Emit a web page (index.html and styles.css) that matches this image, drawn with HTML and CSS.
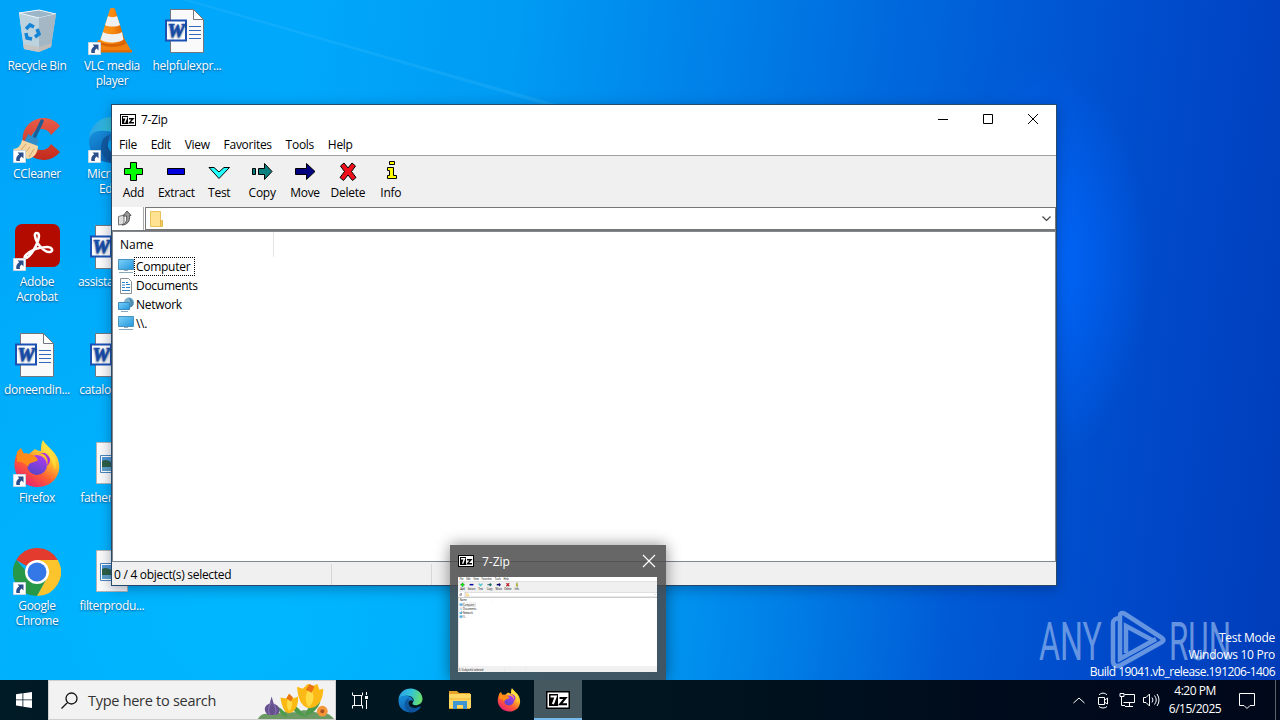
FILE: index.html
```html
<!DOCTYPE html>
<html lang="en">
<head>
    <meta charset="UTF-8">
    <meta name="viewport" content="width=device-width, initial-scale=1.0">
    <title>Desktop</title>
    <link rel="stylesheet" href="styles.css">
</head>
<body>
    <!-- shared icons -->
    <svg class="defs" width="0" height="0">
        <defs>
            <linearGradient id="screenFill" x1="0" y1="0" x2="1" y2="1"><stop offset="0" stop-color="#7fd2fa"/><stop offset="1" stop-color="#2196dc"/></linearGradient>
            <linearGradient id="coneFill" x1="0" x2="1"><stop offset="0" stop-color="#ff9a20"/><stop offset=".5" stop-color="#f88a10"/><stop offset="1" stop-color="#d85f00"/></linearGradient>
            <linearGradient id="foxFill" x1=".85" y1="0" x2=".2" y2="1"><stop offset="0" stop-color="#fff44f"/><stop offset=".35" stop-color="#ffbd2c"/><stop offset=".65" stop-color="#ff5a35"/><stop offset="1" stop-color="#e5177f"/></linearGradient>
            <linearGradient id="foxGlobe" x1=".7" y1="0" x2=".3" y2="1"><stop offset="0" stop-color="#b03af0"/><stop offset="1" stop-color="#5546c8"/></linearGradient>
            <linearGradient id="edgeTop" x1="0" x2="1" y1=".3" y2=".5"><stop offset="0" stop-color="#2a9fe8"/><stop offset=".5" stop-color="#33c4d8"/><stop offset="1" stop-color="#6be06a"/></linearGradient>
            <linearGradient id="edgeBottom" x1="0" y1="0" x2=".6" y2="1"><stop offset="0" stop-color="#1793e0"/><stop offset="1" stop-color="#0c59a8"/></linearGradient>
            <linearGradient id="ccFill" x1="0" y1="0" x2="0" y2="1"><stop offset="0" stop-color="#e85c48"/><stop offset="1" stop-color="#c22a1c"/></linearGradient>
            <linearGradient id="binFill" x1="0" y1="0" x2="1" y2="1"><stop offset="0" stop-color="#d9e6ee"/><stop offset="1" stop-color="#93adc0"/></linearGradient>

            <symbol id="shortcut" viewBox="0 0 13 13">
                <path d="M.5.5h12v12H.5z" fill="#fff" stroke="#c8d8e4"/>
                <path d="M4.500 2.500h6v6L8.600 6.600C7 7.800 6.400 9 7 11H3.400C2.600 8 4 6 6.200 4.300z" fill="#2a4f8c"/>
            </symbol>
            <symbol id="bin" viewBox="0 0 48 48">
                <path d="m6 5 20-3 17 4-5 33-12 5-15-3z" fill="url(#binFill)"/>
                <path d="m6 5 20 5v34l-15-3z" fill="#bdd2df"/>
                <path d="m6 5 20-3 17 4-17 4z" fill="#9bb6c8" stroke="#eef5f9"/>
                <path d="m26 10 17-4-5 33-12 5z" fill="#a3b7c5"/>
                <path d="m10 36 16 3 13-4-1 4-12 5-15-3z" fill="#c9bfb6" opacity=".7"/>
                <g fill="none" stroke="#1484d6" stroke-width="3.500"><path d="m13 21 4-4 4 2"/><path d="m24 21 2 5-4 3"/><path d="m19 31-5-1-1-5"/></g>
            </symbol>
            <symbol id="vlc" viewBox="0 0 48 48">
                <path d="M10 32h27l7 12H5z" fill="#f08010"/>
                <path d="M5 42h39v2.500H5z" fill="#e56d00"/>
                <path d="M11 35c3 5 24 5 27 0l-2-5H13z" fill="#d96200"/>
                <path d="M22 1c1-1.300 4-1.300 5 0l10 32c-3 4-22 4-25 0z" fill="url(#coneFill)"/>
                <path d="m20 8-3 9c3 2 12 2 15 0l-3-9c-2 1.500-7 1.500-9 0zM15 24l-2.500 7.500c4 4 19 4 23 0L34 24c-4 3-15 3-19 0z" fill="#eef0f2"/>
            </symbol>
            <symbol id="word" viewBox="0 0 48 48">
                <path d="M8.500 1.500h23l10 10v33h-33z" fill="#fafafa" stroke="#73777d"/>
                <path d="M31.500 1.500v10h10z" fill="#fff" stroke="#73777d"/>
                <path d="M27 18.500h12M27 22.500h12M27 26.500h12M27 30.500h12" stroke="#3269b8"/>
                <path d="M4 12.500h20v20H4z" fill="#fff" stroke="#1c51b4" stroke-width="2"/>
                <text x="5.500" y="28.500" textLength="17" lengthAdjust="spacingAndGlyphs" class="word-letter">W</text>
            </symbol>
            <symbol id="picture" viewBox="0 0 48 48">
                <path d="M8.500 2.500h31v41h-31z" fill="#fafafa" stroke="#b5b5b5"/>
                <path d="M12.500 15.500h23v17h-23z" fill="#fff" stroke="#4b85bd"/>
                <path d="M14 17h20v7H14z" fill="#4f96d6"/>
                <path d="M14 21q5-3 10 2l10 2v3H14z" fill="#2e6046"/><path d="M14 27h20v4H14z" fill="#5fa1c9"/>
            </symbol>
            <symbol id="ccleaner" viewBox="0 0 48 48">
                <path d="M47 10A21 21 0 1 0 47 36l-9-8A10.500 10.500 0 1 1 38 19z" fill="url(#ccFill)"/>
                <path d="m29 5-9 19" stroke="#1d5d91" stroke-width="3.500" stroke-linecap="round"/>
                <path d="m15 18 11 6-3 7-12-5z" fill="#2f8dca"/>
                <path d="m9 24 16 6c0 8-5 12-10 13C9 41 4 37 0 33c5 0 8-4 9-9z" fill="#f5d5a2"/>
                <path d="m7 35 6-7m-2 10 6-7m-1 10 5-8" stroke="#d3a669"/>
            </symbol>
            <symbol id="edge" viewBox="0 0 48 48">
                <path d="M1 23C2 9 12 1 24 1c14 0 23 10 23 20 0 8-7 12-13 12-5 0-7-2-6-4 6-7-1-15-11-14C9 15 3 18 1 23z" fill="url(#edgeTop)"/>
                <path d="M1 24c1-7 8-10 16-9 7 1 12 5 12 10-3-3-8-2-9 3-1 8 9 14 21 8 2-1 3 0 2 2-5 7-13 10-20 9C9 46 1 37 1 24z" fill="url(#edgeBottom)"/>
                <path d="M20 28c-1 9 9 14 21 8-5 7-11 10-17 10-9-2-13-12-10-20 1-4 4-6 8-7-1 2-2 5-2 9z" fill="#114a8b" opacity=".65"/>
            </symbol>
            <symbol id="acrobat" viewBox="0 0 48 48">
                <rect x="2" y="0" width="45" height="43" rx="7" fill="#b30b00"/>
                <path d="M13 34c4-1 12-13 13-22 0-4-5-4-4 0 1 8 10 17 15 16 4-1 2-5-3-5-9 0-17 4-21 8-2 2-2 4 0 3z" fill="none" stroke="#fff" stroke-width="2.500"/>
            </symbol>
            <symbol id="firefox" viewBox="0 0 48 48">
                <path d="M30 0c2 5 10 9 14 17 7 15-3 30-19 30C9 47-1 33 2 20c1-5 2-8 5-11l2 5c2-1 5-1 7 0l6-5c3 2 6 2 6 2 0-4 0-8 2-11z" fill="url(#foxFill)"/>
                <circle cx="24" cy="25" r="10" fill="url(#foxGlobe)"/>
                <path d="M4 12 8 8l3 6c4-1 8 0 12 3l2 3c-3 3-9 1-10 7-2-3-7-6-11-5z" fill="#ff8a18"/>
                <path d="M25 13c8 0 11 6 9 13 5-4 3-10 0-13z" fill="#a62ee8"/>
                <path d="M31 2c8 9 14 16 11 28-2-7-4-12-9-16-4-4-5-8-2-12z" fill="#ffe03f" opacity=".75"/>
            </symbol>
            <symbol id="chrome" viewBox="0 0 48 48">
                <path d="M24 24 3.200 12A24 24 0 0 1 44.800 12z" fill="#e33b2e"/>
                <path d="M24 24h-10L3.200 12A24 24 0 0 0 24 48l10-18z" fill="#279847"/>
                <path d="M24 12h20.800A24 24 0 0 1 24 48l10-18z" fill="#fcc42c"/>
                <circle cx="24" cy="24" r="12" fill="#fff"/><circle cx="24" cy="24" r="9.500" fill="#3478e8"/>
            </symbol>
            <symbol id="sevenzip" viewBox="0 0 16 12">
                <path d="M0 0h16v12H0z" fill="#000"/><path d="M1 1h14v10H1z" fill="#fff"/><path d="M2 2h6v8H2z" fill="#000"/>
                <path d="M3 3.700h3.500L4.600 8.700" fill="none" stroke="#fff" stroke-width="1.400"/>
                <path d="M9 4.700h4L9.500 8.800H14" fill="none" stroke="#000" stroke-width="1.400"/>
            </symbol>
            <symbol id="monitor" viewBox="0 0 16 16">
                <path d="M.5.5h15v10H.5z" fill="url(#screenFill)" stroke="#4a93bf"/>
                <path d="M6 11h4v1H6z" fill="#9ab"/><path d="M1 13.500h14" stroke="#8aa9bc"/>
            </symbol>
        </defs>
    </svg>

    <div class="screen">
        <svg class="rays" width="1280" height="680" viewBox="0 0 1280 680">
            <path d="M190 0 556 104H542L182 0z" fill="#5ac8ff" opacity=".17"/>
        </svg>

        <div class="desktop">
            <div class="shortcut"><div class="pic"><svg><use href="#bin"/></svg></div><span>Recycle Bin</span></div>
            <div class="shortcut"><div class="pic"><svg><use href="#ccleaner"/></svg><svg class="arrow"><use href="#shortcut"/></svg></div><span>CCleaner</span></div>
            <div class="shortcut"><div class="pic"><svg><use href="#acrobat"/></svg><svg class="arrow"><use href="#shortcut"/></svg></div><span>Adobe Acrobat</span></div>
            <div class="shortcut"><div class="pic doc"><svg><use href="#word"/></svg></div><span>doneendin...</span></div>
            <div class="shortcut"><div class="pic"><svg><use href="#firefox"/></svg><svg class="arrow"><use href="#shortcut"/></svg></div><span>Firefox</span></div>
            <div class="shortcut"><div class="pic"><svg><use href="#chrome"/></svg><svg class="arrow"><use href="#shortcut"/></svg></div><span>Google Chrome</span></div>
            <div class="shortcut"><div class="pic"><svg><use href="#vlc"/></svg><svg class="arrow"><use href="#shortcut"/></svg></div><span>VLC media player</span></div>
            <div class="shortcut"><div class="pic"><svg><use href="#edge"/></svg><svg class="arrow"><use href="#shortcut"/></svg></div><span>Microsoft Edge</span></div>
            <div class="shortcut"><div class="pic doc"><svg><use href="#word"/></svg></div><span>assistantan...</span></div>
            <div class="shortcut"><div class="pic doc"><svg><use href="#word"/></svg></div><span>catalogson...</span></div>
            <div class="shortcut"><div class="pic"><svg><use href="#picture"/></svg></div><span>fathercom...</span></div>
            <div class="shortcut"><div class="pic"><svg><use href="#picture"/></svg></div><span>filterprodu...</span></div>
            <div class="shortcut"><div class="pic doc"><svg><use href="#word"/></svg></div><span>helpfulexpr...</span></div>
        </div>

        <div class="window">
            <div class="titlebar">
                <svg class="app-icon"><use href="#sevenzip"/></svg>
                <span class="title">7-Zip</span>
                <div class="controls">
                    <svg viewBox="0 0 10 10"><path d="M0 5.500h10"/></svg>
                    <svg viewBox="0 0 10 10"><path d="M.5.500h9v9h-9z"/></svg>
                    <svg viewBox="0 0 10 10"><path d="m0 0 10 10M10 0 0 10"/></svg>
                </div>
            </div>
            <div class="client" id="client">
                <div class="menu">
                    <span>File</span><span>Edit</span><span>View</span><span>Favorites</span><span>Tools</span><span>Help</span>
                </div>
                <div class="toolbar">
                    <div class="tool"><svg viewBox="0 0 22 22"><path d="M8.500 1.500h6v6h6v6h-6v6h-6v-6h-6v-6h6z" fill="#0f0" stroke="#000"/></svg><span>Add</span></div>
                    <div class="tool"><svg viewBox="0 0 22 22"><path d="M2.500 7.500h17v6h-17z" fill="#00d" stroke="#000"/></svg><span>Extract</span></div>
                    <div class="tool"><svg viewBox="0 0 22 22"><path d="M1 6.500h5l5 4.500 5-4.500h5.500l-10.500 11z" fill="#2ff" stroke="#000"/></svg><span>Test</span></div>
                    <div class="tool"><svg viewBox="0 0 22 22"><path d="M1.500 7.500h3v6h-3zM7.500 7.500h6v-5L21 10.500l-7.500 8v-5h-6z" fill="#088080" stroke="#000"/></svg><span>Copy</span></div>
                    <div class="tool"><svg viewBox="0 0 22 22"><path d="M1.500 7.500h11v-5L21 10.500l-8.500 8v-5h-11z" fill="#000080" stroke="#000"/></svg><span>Move</span></div>
                    <div class="tool"><svg viewBox="0 0 22 22"><path d="M3.500 5 7 2l4 5 4-5 3.500 3-4 5.500 4.500 6-3.500 3-4.500-5.500-4.500 5.500-3.500-3 4.500-6z" fill="#f0101c" stroke="#000"/></svg><span>Delete</span></div>
                    <div class="tool"><svg viewBox="0 0 22 22"><path d="M9.500.500h5v3h-5zM7.500 6.500h6v8h3v3h-9v-3h2v-5h-2z" fill="#ff0" stroke="#000"/></svg><span>Info</span></div>
                </div>
                <div class="address">
                    <div class="up">
                        <svg width="16" height="16" viewBox="0 0 16 16"><path d="M1.500 6.500 7 5v9l-5.500 1z" fill="#ddd" stroke="#777"/><path d="M5 15c4-1 5-4 4.500-9H6l4-5 4 4.500h-1.500C13.500 11 10 15 5 15z" fill="#999" stroke="#555"/></svg>
                    </div>
                    <div class="path">
                        <svg width="14" height="16" viewBox="0 0 14 16"><path d="M.5.500h10v15H.5z" fill="#ffe392" stroke="#e8c35c"/><path d="M10.500 9.500h2v6h-2z" fill="#f5cf68" stroke="#e3b64c"/></svg>
                        <svg class="chevron" width="9" height="6" viewBox="0 0 9 6"><path d="m.5.500 4 4 4-4" fill="none" stroke="#444" stroke-width="1.200"/></svg>
                    </div>
                </div>
                <div class="list">
                    <div class="list-head"><span>Name</span></div>
                    <div class="item"><svg viewBox="0 0 16 16"><use href="#monitor"/></svg><span class="focused">Computer</span></div>
                    <div class="item"><svg viewBox="0 0 16 16"><path d="M2.500.500h8l3 3v12h-11z" fill="#fff" stroke="#8a8f94"/><path d="M4 4.500h3M4 7h3M8 6.500h4M4 9.500h3M8 9.500h4M4 12.500h8M8 4.500h2" stroke="#2b83c8"/></svg><span>Documents</span></div>
                    <div class="item"><svg viewBox="0 0 16 16"><circle cx="11" cy="5.500" r="5" fill="#7fb2cc"/><path d="M10 .5c3 3 3 7 1 10 6 0 6-8-1-10z" fill="#4a8bb0"/><path d="M.5 5.500h11v7H.5z" fill="url(#screenFill)" stroke="#3a8cc0"/><path d="M3 14.500h7" stroke="#8aa9bc"/></svg><span>Network</span></div>
                    <div class="item"><svg viewBox="0 0 16 16"><use href="#monitor"/></svg><span>\\.</span></div>
                </div>
                <div class="status"><span class="part wide">0 / 4 object(s) selected</span><span class="part"></span><span class="rest"></span></div>
            </div>
        </div>

        <svg class="watermark" width="200" height="64" viewBox="0 0 200 64">
            <text x="2" y="51" textLength="63" lengthAdjust="spacingAndGlyphs">ANY</text>
            <text x="132" y="51" textLength="62" lengthAdjust="spacingAndGlyphs">RUN</text>
            <path d="M83 9c-4 0-7 2-7 5v38c0 5 4 6 8 4l41-23c2-1 2-3 0-4L88 5c-3-2-5-1-5 2v43l36-20M89 44V17l28 15"/>
        </svg>
        <div class="build">
            <div>Test Mode</div>
            <div>Windows 10 Pro</div>
            <div class="number">Build 19041.vb_release.191206-1406</div>
        </div>

        <div class="preview">
            <div class="preview-head">
                <svg class="app-icon"><use href="#sevenzip"/></svg>
                <span>7-Zip</span>
                <svg class="close" viewBox="0 0 12 12"><path d="m0 0 12 12M12 0 0 12"/></svg>
            </div>
            <div class="thumb" id="thumb"></div>
        </div>

        <div class="taskbar">
            <div class="start"><svg width="16" height="16" viewBox="0 0 16 16"><path d="m0 2.200 6.500-.9v6.200H0zM7.300 1.200 16 0v7.500H7.300zM0 8.300h6.500v6.200L0 13.600zM7.300 8.300H16V16l-8.700-1.200z" fill="#fff"/></svg></div>
            <div class="search">
                <svg class="glass" width="17" height="17" viewBox="0 0 17 17"><path d="M16 6.500a5.500 5.500 0 1 1-11 0 5.500 5.500 0 0 1 11 0zM6.500 10.500.5 16.500" fill="none" stroke="#111" stroke-width="1.300"/></svg>
                <span>Type here to search</span>
                <svg class="flowers" width="78" height="38" viewBox="0 0 80 39">
                    <path d="M1 39c4-8 12-5 18-4 8-7 15-2 22-3 10-5 19 1 24 1 7-1 11 2 14 6z" fill="#6b9b62"/>
                    <path d="M31 36C27 30 24 27 21 27c2 5 5 9 10 10zM50 37c-7-10-12-13-16-14 2 7 7 12 16 14zM49 36c2-9 8-15 16-15-2 7-8 13-16 15z" fill="#4c9a4a"/>
                    <path d="m15 16 2 7c6 2 9 8 3 12h-8c-6-4-5-10 1-12z" fill="#66518f"/><path d="M15 22c-4 5-4 10-1 14M17 23c3 5 3 9 1 12" stroke="#9079b8" fill="none"/>
                    <path d="m24 17 6 1 3-5 4 5 5-2c1 6-2 17-9 17-6 0-8-10-9-16z" fill="#fcb913"/><path d="M33 15c-3 6-3 12 0 16 4-4 4-11 0-16z" fill="#ffdb48"/>
                    <path d="m41 6 6 2 5-5 6 2 4-2 2 6 4-1c0 10-4 19-14 20C44 27 42 15 41 6z" fill="#fdb915"/><path d="M54 7c-5 5-5 15-1 20 6-5 7-14 1-20z" fill="#ffdc45"/><path d="m50 9 4-6 5 3-3 6zM30 18l3-5 4 4-2 4z" fill="#e87413"/>
                    <circle cx="67" cy="31" r="5.500" fill="#f49538"/><circle cx="67" cy="31" r="2" fill="#a65020"/>
                </svg>
            </div>
            <div class="task"><svg width="17" height="17" viewBox="0 0 17 17"><path d="M.5 3V.500M10.500 3V.500M.5 3.500h10M2.500 3.500v10M9.500 3.500v10M.5 13.500h10v3M.5 13.500v3M14.500 0v3M14.500 8v9" fill="none" stroke="#fff"/><path d="M13 4h3v3h-3z" fill="#fff"/></svg></div>
            <div class="task"><svg width="25" height="25"><use href="#edge"/></svg></div>
            <div class="task"><svg width="22" height="20" viewBox="0 0 22 20"><path d="M0 1h8l2 2h11v16H0z" fill="#e5a328"/><path d="M0 4h22v14H0z" fill="#ffd863"/><path d="M4 19v-8h14v8h-4v-4H8v4z" fill="#3f95d1"/><path d="M0 8h22v2H0z" fill="#f7c74d"/></svg></div>
            <div class="task"><svg width="24" height="24"><use href="#firefox"/></svg></div>
            <div class="task active"><svg width="24" height="18"><use href="#sevenzip"/></svg></div>
            <div class="tray">
                <div><svg width="12" height="7" viewBox="0 0 12 7"><path d="m.5 6 5.500-5 5.500 5"/></svg></div>
                <div><svg width="12" height="17" viewBox="0 0 12 17"><path d="M1.500 5.500h6v7h-6zM8 8l2.500-2v6L8 10.500M2 3c2-2.500 6-2.500 8 0M2 14.500c2 2 6 2 8 0"/></svg></div>
                <div><svg width="16" height="14" viewBox="0 0 16 14"><path d="M5.500 1.500h10v8H4.500M10.500 10v3M6 13.500h8M1 .5h4v3H1zM2.500 4v8.500H6"/></svg></div>
                <div><svg width="17" height="14" viewBox="0 0 17 14"><path d="M.5 4.500H3L6.500 1v12L3 9.500H.5zM9 4.500q2 2.500 0 5M11.500 2.500q3.500 4.500 0 9M14 1q4 6 0 12"/></svg></div>
            </div>
            <div class="clock"><div>4:20 PM</div><div>6/15/2025</div></div>
            <div class="notify"><svg width="16" height="18" viewBox="0 0 16 18"><path d="M.5 2.500h15v12H11l-3 3-3-3H.5z"/></svg></div>
            <div class="show-desktop"></div>
        </div>
    </div>

    <script>
        // live thumbnail of the open window
        let copy = document.getElementById('client').cloneNode(true);
        copy.removeAttribute('id');
        document.getElementById('thumb').appendChild(copy);
    </script>
</body>
</html>
```

FILE: styles.css
```css
* {
    box-sizing: border-box;
}
body {
    margin: 0;
    font-family: "Open Sans", "Noto Sans", sans-serif;
    font-size: 12px;
    letter-spacing: -.28px;
    color: #000;
}
.defs {
    position: absolute;
}
.screen {
    position: relative;
    width: 1280px;
    height: 720px;
    overflow: hidden;
    background:
        radial-gradient(ellipse 105px 200px at 1045px 262px, rgba(0, 104, 255, .95), rgba(0, 98, 250, 0)),
        linear-gradient(97deg, #00a5f9 0, #00a8fb 22%, #009bf3 38%, #0080e8 53%, #0068dc 66%, #0054d2 79%, #0046c6 90%, #003cb8 100%);
}
.screen::before {
    content: "";
    position: absolute;
    inset: 0;
    background: radial-gradient(ellipse 700px 500px at 250px 620px, rgba(0, 184, 255, .95), rgba(0, 176, 255, 0));
}
.rays {
    position: absolute;
    top: 0;
    left: 0;
}
.desktop {
    position: relative;
    display: grid;
    grid-template-rows: repeat(6, 108px);
    grid-auto-columns: 75px;
    grid-auto-flow: column;
    width: 225px;
}
.shortcut {
    display: flex;
    flex-direction: column;
    align-items: center;
    width: 74px;
    padding-top: 8px;
    color: #fff;
    letter-spacing: -.34px;
    line-height: 15px;
    text-align: center;
    text-shadow: 0 1px 2px rgba(0, 40, 90, .7);
}
.shortcut span {
    margin-top: 2px;
    padding: 0 4px;
}
.pic {
    position: relative;
    width: 48px;
    height: 48px;
}
.pic > svg {
    width: 48px;
    height: 48px;
}
.pic.doc {
    left: -1px;
}
.pic .arrow {
    position: absolute;
    left: 0;
    bottom: 1px;
    width: 13px;
    height: 13px;
}
.word-letter {
    font: italic bold 19px "Liberation Serif", serif;
    fill: #1c51b4;
    stroke: #1c51b4;
    stroke-width: .6px;
}

/* 7-Zip window */
.window {
    position: absolute;
    left: 111px;
    top: 104px;
    width: 946px;
    height: 482px;
    border: 1px solid #284a68;
    background: #fff;
    box-shadow: 0 3px 12px rgba(0, 20, 60, .35);
}
.titlebar {
    display: flex;
    align-items: center;
    height: 30px;
    padding: 0 0 1px 8px;
}
.app-icon {
    width: 16px;
    height: 12px;
}
.title {
    margin-left: 5px;
}
.controls {
    display: flex;
    gap: 35px;
    margin: -1px 18px 0 auto;
}
.controls svg {
    width: 10px;
    height: 10px;
    fill: none;
    stroke: #000;
    overflow: visible;
}
.client {
    display: flex;
    flex-direction: column;
    width: 944px;
    height: 450px;
    background: #fff;
}
.menu {
    display: flex;
    gap: 13.800px;
    height: 20px;
    padding-left: 7px;
    line-height: 20px;
}
.toolbar {
    display: flex;
    height: 52px;
    padding: 5px 0 0;
    border-top: 1px solid #a0a0a0;
    background: #f0f0f0;
}
.tool {
    display: flex;
    flex-direction: column;
    align-items: center;
    width: 42.900px;
}
.tool svg {
    width: 22px;
    height: 22px;
}
.tool span {
    margin-top: 2px;
    line-height: 16px;
}
.address {
    display: flex;
    height: 24px;
    border-bottom: 1px solid #777;
}
.up {
    width: 32px;
    padding: 3px 0 0 5px;
    border-right: 1px solid #aaa;
    margin-right: 1px;
}
.path {
    display: flex;
    flex: 1;
    align-items: center;
    padding: 0 4px;
    border: 1px solid #777;
}
.chevron {
    margin-left: auto;
}
.list {
    flex: 1;
    border: 1px solid #828790;
}
.list-head {
    width: 161px;
    height: 25px;
    padding-left: 7px;
    border-right: 1px solid #e5e5e5;
    letter-spacing: 0;
    line-height: 26px;
}
.item {
    display: flex;
    align-items: center;
    height: 19px;
    padding-left: 5px;
}
.item svg {
    width: 16px;
    height: 16px;
}
.item span {
    padding: 0 1px;
    border: 1px solid transparent;
    line-height: 17px;
}
.item .focused {
    padding-right: 4px;
    border: 1px dotted #000;
}
.status {
    display: flex;
    height: 23px;
    padding: 2px 0 0 1px;
    background: #f0f0f0;
    line-height: 21px;
}
.part {
    width: 100px;
    padding-left: 1px;
    border-right: 1px solid #d7d7d7;
}
.part.wide {
    width: 219px;
}

/* desktop corner text */
.watermark {
    position: absolute;
    left: 1037px;
    top: 609px;
    fill: #87aeea;
    opacity: .75;
}
.watermark text {
    font: 400 53px Roboto, sans-serif;
    letter-spacing: 0;
}
.watermark path {
    fill: none;
    stroke: #87aeea;
    stroke-width: 4.500;
}
.build {
    position: absolute;
    right: 5px;
    top: 629px;
    color: #fff;
    text-align: right;
    line-height: 17px;
}
.number {
    letter-spacing: -.55px;
}

/* taskbar thumbnail */
.preview {
    position: absolute;
    left: 450px;
    top: 545px;
    width: 216px;
    height: 135px;
    padding: 0 8px;
    background: rgba(80, 70, 66, .8);
    background: linear-gradient(rgba(72, 72, 72, .83) 40px, rgba(80, 70, 66, .8) 41px);
    box-shadow: 0 0 14px rgba(0, 0, 0, .45);
    color: #fff;
}
.preview-head {
    display: flex;
    align-items: center;
    height: 32px;
    letter-spacing: 0;
}
.preview-head span {
    margin-left: 8px;
}
.close {
    width: 12px;
    height: 12px;
    margin: 0 3px 0 auto;
    stroke: #fff;
    stroke-width: 1.200;
    overflow: visible;
}
.thumb {
    width: 199px;
    height: 95px;
    overflow: hidden;
    background: #fff;
    color: #000;
}
.thumb .client {
    transform: scale(.211);
    transform-origin: 0 0;
}

.taskbar {
    position: absolute;
    left: 0;
    right: 0;
    bottom: 0;
    display: flex;
    height: 40px;
    background: linear-gradient(90deg, #001a26, #00151f 50%, #000b1c 80%, #00081a);
}
.start, .task, .notify {
    display: flex;
    align-items: center;
    justify-content: center;
    width: 48px;
}
.search {
    display: flex;
    align-items: center;
    width: 288px;
    padding-left: 12px;
    border: 1px solid #cfcfcf;
    background: #f2f2f2;
    color: #333;
    font-size: 14.500px;
}
.search span {
    margin-left: 10px;
    white-space: nowrap;
}
.flowers {
    margin-left: auto;
}
.task {
    width: 49.500px;
}
.task.active {
    width: 48px;
    padding-top: 2px;
    border-bottom: 2px solid #76b9ed;
    background: #45575f;
}
.tray {
    display: flex;
    align-items: center;
    margin-left: auto;
}
.tray div {
    display: flex;
    justify-content: center;
    width: 24px;
}
.tray svg, .notify svg {
    fill: none;
    stroke: #fff;
}
.clock {
    width: 64px;
    padding-top: 2px;
    color: #fff;
    letter-spacing: -.5px;
    line-height: 18px;
    text-align: center;
}
.notify {
    width: 40px;
}
.show-desktop {
    width: 5px;
    margin-left: 8px;
    border-left: 1px solid #59616b;
}
```
